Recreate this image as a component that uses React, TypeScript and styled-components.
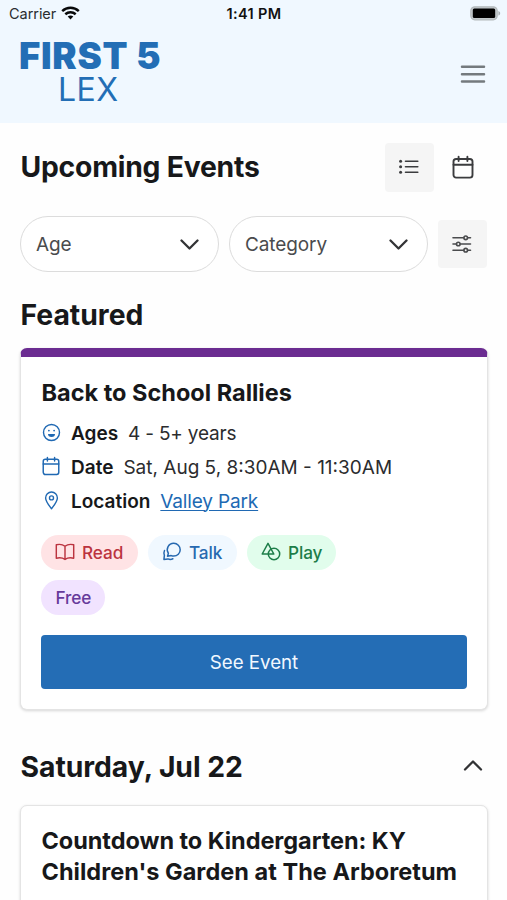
import React from 'react';
import styled, { createGlobalStyle } from 'styled-components';

const Global = createGlobalStyle`
  * { box-sizing: border-box; }
  body {
    margin: 0;
    background: #fff;
    color: #17181a;
    font-family: Inter, "Liberation Sans", sans-serif;
    overflow: hidden;
  }
`;

const Screen = styled.div`
  width: 507px;
  height: 900px;
  overflow: hidden;
  background: #fefefe;
`;

const Header = styled.header`
  height: 123px;
  background: #f0f8ff;
`;

const StatusBar = styled.div`
  display: grid;
  grid-template-columns: 1fr auto 1fr;
  align-items: center;
  height: 27px;
  padding: 0 7px 0 9px;
  font-size: 14.5px;
  line-height: 27px;
  color: #2a2d30;
`;

const Carrier = styled.div`
  display: flex;
  align-items: center;
  gap: 6px;
  letter-spacing: -0.05px;

  svg {
    margin: -2px 0 0 -1px;
  }
`;

const Clock = styled.div`
  margin-left: -1px;
  font-size: 14.5px;
  font-weight: 600;
  letter-spacing: 0.35px;
  color: #111;
`;

const Battery = styled.div`
  display: flex;
  justify-content: flex-end;
  margin-right: -1px;
`;

const NavBar = styled.div`
  display: flex;
  justify-content: space-between;
  align-items: flex-start;
  padding: 0 21px 0 19px;
`;

const Logo = styled.div`
  width: 142px;
  padding-top: 11px;
  color: #236eb5;
`;

const LogoTop = styled.div`
  font-size: 36.5px;
  font-weight: 900;
  line-height: 36px;
  letter-spacing: 0.7px;
  white-space: nowrap;
`;

const LogoBottom = styled.div`
  padding-left: 39px;
  font-size: 32px;
  line-height: 32px;
  letter-spacing: 0.4px;
`;

const IconButton = styled.button<{ $filled?: boolean; $height?: number }>`
  display: flex;
  align-items: center;
  justify-content: center;
  width: 49px;
  height: ${(p) => p.$height ?? 49}px;
  padding: 0 2px 0 0;
  border: 0;
  border-radius: 4px;
  background: ${(p) => (p.$filled ? '#f5f5f5' : 'transparent')};
  color: #3b3c3e;
`;

const MenuButton = styled.button`
  display: flex;
  margin-top: 37px;
  padding: 0;
  border: 0;
  background: none;
`;

const Main = styled.main`
  padding: 19px 19px 0 20px;
`;

const TitleRow = styled.div`
  display: flex;
  align-items: center;
  justify-content: space-between;
  height: 50px;
`;

const Heading = styled.h2<{ $spacing?: number }>`
  margin: 0;
  padding: 1px 0 0 0.5px;
  font-size: 28.3px;
  line-height: 35px;
  font-weight: 700;
  letter-spacing: ${(p) => p.$spacing ?? 0}px;
  white-space: nowrap;
`;

const ViewSwitch = styled.div`
  display: flex;
  gap: 5px;
`;

const Filters = styled.div`
  display: grid;
  grid-template-columns: 199px 199px 49px;
  column-gap: 10px;
  align-items: center;
  margin-top: 24px;
`;

const Select = styled.button`
  display: flex;
  align-items: center;
  justify-content: space-between;
  height: 56px;
  padding: 2px 19.5px 0 15px;
  border: 1.5px solid #dcdcdc;
  border-radius: 28px;
  background: #fff;
  font: 400 19px/24px Inter, sans-serif;
  letter-spacing: -0.1px;
  color: #4a4b4d;

  svg {
    margin-top: -2px;
  }
`;

const FeaturedHeading = styled(Heading)`
  margin-top: 25px;
`;

const Card = styled.article<{ $featured?: boolean }>`
  padding: 20px 20px 21px;
  border: 1px solid #e4e4e4;
  border-radius: 7px;
  background: #fff;
  box-shadow: 0 1px 3px rgba(0, 0, 0, 0.16);
  ${(p) =>
    p.$featured &&
    `
    height: 362px;
    margin-top: 15px;
    padding-top: 21px;
    border-top: 9px solid #6b2c91;
  `}
`;

const CardTitle = styled.h3<{ $spacing?: number }>`
  margin: 0;
  padding-left: 0.5px;
  font-size: 23.5px;
  line-height: 30.5px;
  font-weight: 650;
  letter-spacing: ${(p) => p.$spacing ?? 0}px;
  white-space: nowrap;
`;

const TitleLine = styled.span<{ $spacing?: number }>`
  display: block;
  letter-spacing: ${(p) => p.$spacing ?? 0}px;
`;

const Details = styled.dl`
  display: grid;
  gap: 8px;
  margin: 12px 0 0;
`;

const Detail = styled.div`
  display: flex;
  align-items: center;
  height: 26px;
  font-size: 19px;
  line-height: 26px;
  white-space: nowrap;
`;

const DetailIcon = styled.span`
  display: flex;
  width: 30px;
  margin-top: -3px;
  padding-left: 0.5px;
  color: #2069b3;
`;

const Term = styled.dt`
  margin-right: 10px;
  font-weight: 600;
`;

const Value = styled.dd<{ $spacing?: number }>`
  margin: 0;
  color: #2b2c2e;
  letter-spacing: ${(p) => p.$spacing ?? 0}px;
`;

const Link = styled.a`
  color: #2069b3;
  text-decoration: underline;
  text-decoration-thickness: 1.3px;
  text-underline-offset: 2px;
`;

const Chips = styled.div`
  display: flex;
  flex-wrap: wrap;
  gap: 10px;
  width: 330px;
  margin-top: 20px;
`;

const Chip = styled.span<{ $bg: string; $fg: string; $width: number }>`
  display: flex;
  align-items: center;
  width: ${(p) => p.$width}px;
  height: 35px;
  padding: 1px 0 0 14.5px;
  gap: 7px;
  border-radius: 18px;
  background: ${(p) => p.$bg};
  color: ${(p) => p.$fg};
  font-size: 17.2px;
  font-weight: 450;
  letter-spacing: -0.1px;

  svg {
    margin: -2px 0 0 -0.5px;
  }
`;

const PrimaryButton = styled.button`
  display: block;
  width: 100%;
  height: 54px;
  margin-top: 20px;
  padding: 1px 0 0;
  border: 0;
  border-radius: 4px;
  background: #246db5;
  color: #f2f8ff;
  font: 400 18.7px/53px Inter, sans-serif;
`;

const DayRow = styled.div`
  display: flex;
  align-items: center;
  justify-content: space-between;
  margin: 39px 5px 20px 0;

  svg {
    margin-top: -3px;
  }
`;

const Wifi = () => (
  <svg width="19" height="14" viewBox="0 0 19 14" fill="none" stroke="#08090a" strokeWidth="2.5">
    <path d="M1.2 5.1C6 .7 13 .7 17.8 5.1" />
    <path d="M4.3 8.2c3-2.6 7.4-2.6 10.4 0" />
    <path d="M9.5 13.4 6.7 10.5c1.6-1.4 4-1.4 5.6 0z" fill="#08090a" stroke="none" />
  </svg>
);

const BatteryIcon = () => (
  <svg width="31" height="15" viewBox="0 0 31 15">
    <rect x=".8" y=".8" width="26.4" height="13" rx="4" fill="#c3c9cc" stroke="#b3b9bc" strokeWidth="1.2" />
    <rect x="2.8" y="2.5" width="22.4" height="9.4" rx="1.5" fill="#000" />
    <path d="M28.4 5v4.6c2.4-.8 2.4-3.8 0-4.6z" fill="#a9afb3" />
  </svg>
);

const MenuIcon = () => (
  <svg width="26" height="20" viewBox="0 0 26 20" stroke="#747a7e" strokeWidth="2.5" strokeLinecap="round">
    <path d="M2 2.8h22M2 10.2h22M2 17.5h22" />
  </svg>
);

const ListIcon = () => (
  <svg width="20" height="16" viewBox="0 0 20 16" stroke="#3b3c3e" strokeWidth="1.6" strokeLinecap="round">
    <path d="M6.5 2.3h12.3M6.5 7.8h12.3M6.5 13.3h12.3" />
    <g fill="#3b3c3e" stroke="none">
      <circle cx="1.6" cy="2.3" r="1.5" />
      <circle cx="1.6" cy="7.8" r="1.5" />
      <circle cx="1.6" cy="13.3" r="1.5" />
    </g>
  </svg>
);

const CalendarIcon = ({ size, stroke }: { size: number; stroke: number }) => (
  <svg width={size} height={size * 1.1} viewBox="0 0 22 24.2" fill="none" stroke="currentColor" strokeWidth={stroke} strokeLinecap="round">
    <rect x="1.5" y="4" width="19" height="18.6" rx="2.6" />
    <path d="M1.5 9.8h19M6.6 1.8v4.2M15.4 1.8v4.2" />
  </svg>
);

const SlidersIcon = () => (
  <svg width="20" height="18" viewBox="0 0 20 18" fill="none" stroke="#4a4b4d" strokeWidth="1.6" strokeLinecap="round">
    <path d="M1 2.8h10.7M15.7 2.8H18.5M1 9h3.3M8.3 9H18.5M1 15.2h10.7M15.7 15.2H18.5" />
    <circle cx="13.7" cy="2.8" r="1.8" />
    <circle cx="6.3" cy="9" r="1.8" />
    <circle cx="13.7" cy="15.2" r="1.8" />
  </svg>
);

const Chevron = ({ up }: { up?: boolean }) => (
  <svg width="20" height="13" viewBox="0 0 20 13" fill="none" stroke="#323335" strokeWidth="2.3" strokeLinecap="round" strokeLinejoin="round">
    <path d={up ? 'M2 10.5 10 2.5l8 8' : 'M2.5 2.5l8 8 8-8'} />
  </svg>
);

const SmileIcon = () => (
  <svg width="19" height="19" viewBox="0 0 19 19" fill="none" stroke="currentColor" strokeWidth="1.4">
    <circle cx="9.5" cy="9.5" r="8" />
    <path d="M6 11h7a3.5 3 0 0 1-7 0z" fill="currentColor" stroke="none" />
    <circle cx="6.9" cy="7.6" r=".9" fill="currentColor" stroke="none" />
    <circle cx="12.1" cy="7.6" r=".9" fill="currentColor" stroke="none" />
  </svg>
);

const PinIcon = () => (
  <svg width="19" height="19" viewBox="0 0 19 19" fill="none" stroke="currentColor" strokeWidth="1.4" strokeLinejoin="round">
    <path d="M9.5 17.8C6.7 14 3.6 10.2 3.6 6.9a5.9 5.9 0 0 1 11.8 0c0 3.3-3.1 7.1-5.9 10.9z" />
    <circle cx="9.5" cy="6.9" r="2" />
  </svg>
);

const BookIcon = () => (
  <svg width="20" height="18" viewBox="0 0 20 18" fill="none" stroke="currentColor" strokeWidth="1.45" strokeLinejoin="round">
    <path d="M10 3.3C7.5 1.3 4.5 1 1.3 1.8v13.4c3.2-.7 6.2-.5 8.7 1.2 2.5-1.7 5.5-1.9 8.7-1.2V1.8C15.5 1 12.5 1.3 10 3.3zM10 3.3v13" />
  </svg>
);

const TalkIcon = () => (
  <svg width="20" height="19" viewBox="0 0 20 19" fill="none" stroke="currentColor" strokeWidth="1.5" strokeLinejoin="round" strokeLinecap="round">
    <path d="M11.8 1.3a6.4 6.4 0 1 1 0 12.8c-1 0-1.8-.2-2.6-.5l-3.7.6.9-2.9A6.4 6.4 0 0 1 11.8 1.3z" />
    <path d="M2.5 8.5c-.8 1.7-.8 3.1-.1 4.9l-.5 4 4-.5c1.7.7 3.5.6 5-.1" />
  </svg>
);

const ShapesIcon = () => (
  <svg width="20" height="19" viewBox="0 0 20 19" fill="none" stroke="currentColor" strokeWidth="1.5" strokeLinejoin="round">
    <path d="M7 1.4 12.8 12H1.2z" />
    <circle cx="13" cy="12" r="5.7" />
  </svg>
);

export default function App() {
  return (
    <Screen>
      <Global />
      <Header>
        <StatusBar>
          <Carrier>
            Carrier <Wifi />
          </Carrier>
          <Clock>1:41 PM</Clock>
          <Battery>
            <BatteryIcon />
          </Battery>
        </StatusBar>
        <NavBar>
          <Logo>
            <LogoTop>FIRST 5</LogoTop>
            <LogoBottom>LEX</LogoBottom>
          </Logo>
          <MenuButton aria-label="Menu">
            <MenuIcon />
          </MenuButton>
        </NavBar>
      </Header>
      <Main>
        <TitleRow>
          <Heading $spacing={-0.22}>Upcoming Events</Heading>
          <ViewSwitch>
            <IconButton $filled aria-label="List view">
              <ListIcon />
            </IconButton>
            <IconButton aria-label="Calendar view">
              <CalendarIcon size={22} stroke={1.9} />
            </IconButton>
          </ViewSwitch>
        </TitleRow>
        <Filters>
          <Select>
            Age <Chevron />
          </Select>
          <Select>
            Category <Chevron />
          </Select>
          <IconButton $filled $height={48} aria-label="Filters">
            <SlidersIcon />
          </IconButton>
        </Filters>
        <FeaturedHeading>Featured</FeaturedHeading>
        <Card $featured>
          <CardTitle>Back to School Rallies</CardTitle>
          <Details>
            <Detail>
              <DetailIcon><SmileIcon /></DetailIcon>
              <Term>Ages</Term>
              <Value $spacing={-0.2}>4 - 5+ years</Value>
            </Detail>
            <Detail>
              <DetailIcon><CalendarIcon size={18} stroke={1.8} /></DetailIcon>
              <Term>Date</Term>
              <Value>Sat, Aug 5, 8:30AM - 11:30AM</Value>
            </Detail>
            <Detail>
              <DetailIcon><PinIcon /></DetailIcon>
              <Term>Location</Term>
              <Value $spacing={-0.15}><Link>Valley Park</Link></Value>
            </Detail>
          </Details>
          <Chips>
            <Chip $bg="#ffe3e5" $fg="#bb3440" $width={97}><BookIcon />Read</Chip>
            <Chip $bg="#f0f8ff" $fg="#2769b0" $width={89}><TalkIcon />Talk</Chip>
            <Chip $bg="#e1fdec" $fg="#1d7e49" $width={89}><ShapesIcon />Play</Chip>
            <Chip $bg="#f1e3ff" $fg="#663a9b" $width={64}>Free</Chip>
          </Chips>
          <PrimaryButton>See Event</PrimaryButton>
        </Card>
        <DayRow>
          <Heading $spacing={-0.04}>Saturday, Jul 22</Heading>
          <Chevron up />
        </DayRow>
        <Card>
          <CardTitle>
            <TitleLine $spacing={-0.05}>Countdown to Kindergarten: KY</TitleLine>
            <TitleLine $spacing={0.03}>Children's Garden at The Arboretum</TitleLine>
          </CardTitle>
        </Card>
      </Main>
    </Screen>
  );
}
